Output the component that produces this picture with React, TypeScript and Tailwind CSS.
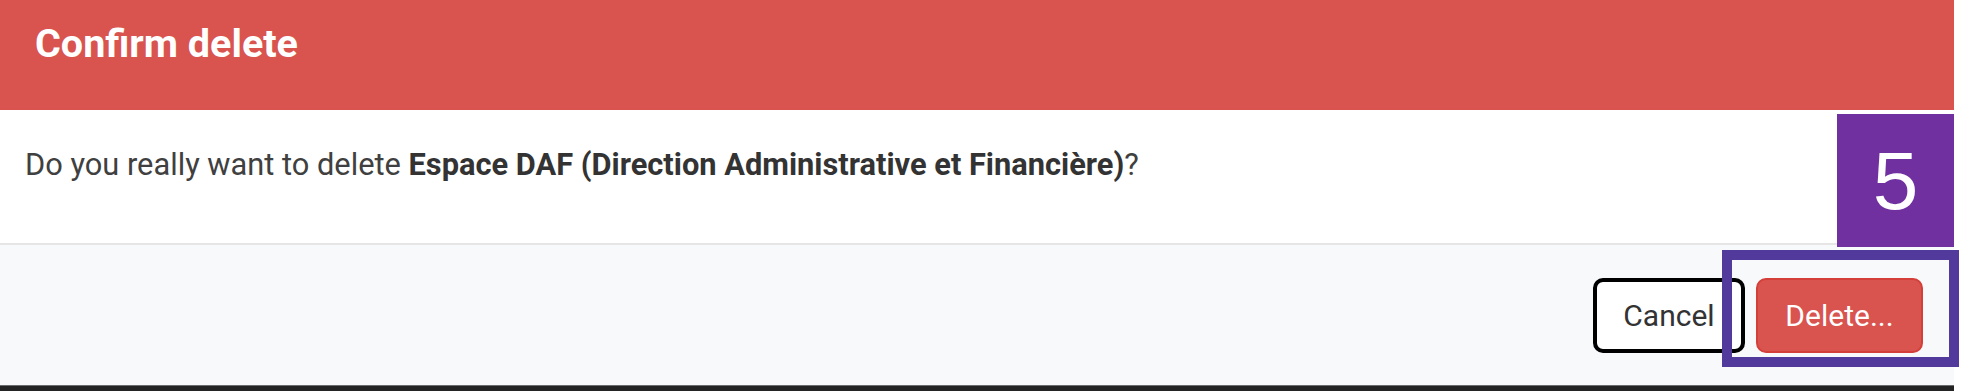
export default function App() {
  return (
    <div className="relative w-[1966px] h-[391px] overflow-hidden bg-white font-['Roboto','Liberation_Sans',sans-serif]">
      <div className="w-[1954px]">
        <header className="h-[110px] bg-[#d9534f] pl-[35px] pt-[20px]">
          <h1 className="text-[39.5px] leading-[48px] font-bold text-white">Confirm delete</h1>
        </header>

        <div className="h-[135px] border-b-2 border-[#e6e6e6] pl-[25px] pt-[32px]">
          <p className="text-[30.8px] leading-[45px] text-[#404040]">
            Do you really want to delete{" "}
            <strong className="font-bold text-[#333]">
              Espace DAF (Direction Administrative et Financière)
            </strong>
            ?
          </p>
        </div>

        <div className="h-[140px] bg-[#f8f9fa] flex items-center justify-end gap-[11px] pr-[31px]">
          <button className="h-[75px] w-[152px] rounded-[10px] border-4 border-black bg-white text-[30px] text-[#333]">
            Cancel
          </button>
          <button className="h-[75px] w-[167px] rounded-[10px] border-2 border-[#d43f3a] bg-[#d9534f] text-[30px] text-white">
            Delete...
          </button>
        </div>

        <div className="h-[6px] bg-[#232323] border-t border-[#6b6b6b]" />
      </div>

      {/* annotation overlays */}
      <div className="absolute left-[1837px] top-[114px] w-[117px] h-[133px] bg-[#7030a0] flex items-center justify-center">
        <span className="text-[82px] leading-none text-white font-['Liberation_Sans',Arial,sans-serif]">5</span>
      </div>
      <div className="absolute left-[1722px] top-[250px] w-[237px] h-[117px] border-[10px] border-[#52399c]" />
    </div>
  );
}
